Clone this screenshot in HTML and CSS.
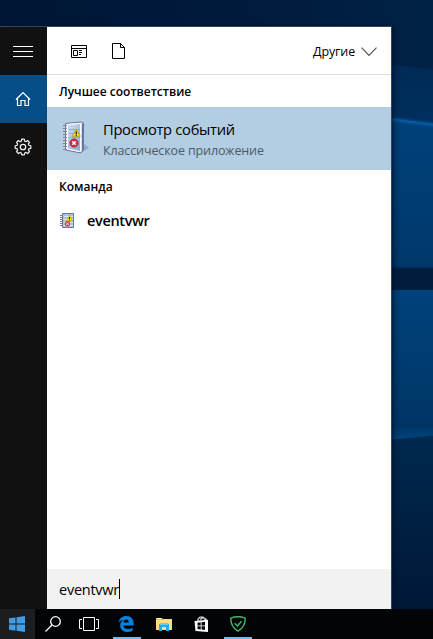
FILE: index.html
```html
<!DOCTYPE html>
<html lang="ru">
<head>
<meta charset="utf-8">
<title>Поиск</title>
<link rel="stylesheet" href="styles.css">
</head>
<body>
<div class="desktop">
  <svg class="wallpaper" viewBox="0 0 433 639" aria-hidden="true">
    <defs>
      <linearGradient id="base" x1="0" x2="1" y1="0" y2="0"><stop offset="0" stop-color="#001634"/><stop offset=".6" stop-color="#001b3d"/><stop offset="1" stop-color="#002247"/></linearGradient>
      <linearGradient id="beam" x1="0" x2="0" y1="0" y2="1"><stop offset="0" stop-color="#002a54"/><stop offset="1" stop-color="#003060"/></linearGradient>
      <linearGradient id="pane" x1="0" x2="0" y1="0" y2="1"><stop offset="0" stop-color="#004179"/><stop offset=".5" stop-color="#003d73"/><stop offset="1" stop-color="#00386b"/></linearGradient>
      <linearGradient id="pane2" x1="0" x2="0" y1="0" y2="1"><stop offset="0" stop-color="#00427b"/><stop offset=".4" stop-color="#003d72"/><stop offset=".9" stop-color="#003566"/><stop offset="1" stop-color="#004580"/></linearGradient>
      <linearGradient id="low" x1="0" x2="0" y1="0" y2="1"><stop offset="0" stop-color="#00294f"/><stop offset="1" stop-color="#001736"/></linearGradient>
      <linearGradient id="shade" x1="0" x2="1" y1="0" y2="0"><stop offset="0" stop-color="#00102a" stop-opacity=".4"/><stop offset="1" stop-color="#00102a" stop-opacity="0"/></linearGradient>
      <filter id="soft" x="-20%" y="-100%" width="140%" height="300%"><feGaussianBlur stdDeviation="1"/></filter>
    </defs>
    <path fill="url(#base)" d="M0 0h433v639H0z"/>
    <path fill="url(#beam)" d="M380 63l53 7v60h-53z"/>
    <path fill="url(#pane)" d="M380 117l53 7v144h-53z"/>
    <path filter="url(#soft)" fill="none" stroke="#075da6" stroke-width="3" d="M380 118l63 8"/>
    <path fill="#001a3a" filter="url(#soft)" d="M380 268h63v21h-63z"/>
    <path fill="url(#pane2)" d="M380 290h53v146l-53 5z"/>
    <path fill="url(#low)" d="M380 441l53-5v173h-53z"/>
    <path fill="url(#shade)" d="M391 27h10v582h-10z"/>
  </svg>

  <div class="panel">
    <nav class="rail">
      <div class="rail-item"><svg width="24" height="24" viewBox="0 0 24 24"><path stroke="#fff" d="M2 7.500h20M2 12.500h20M2 17.500h20"/></svg></div>
      <div class="rail-item active"><svg width="24" height="24" viewBox="0 0 24 24" fill="none" stroke="#fff" stroke-width="1.200"><path d="M5 12.500 12 5.500l7 7M6.500 11.500v7h3.500v-5h4v5h3.500v-7"/></svg></div>
      <div class="rail-item"><svg width="24" height="24" viewBox="-12 -12 24 24" fill="none" stroke="#f0f0f0" stroke-width="1.300"><circle r="2.700"/><path stroke-linejoin="round" d="M-1.400-7.400h2.800l.4 2 1.500.6 1.700-1.200 2 2-1.200 1.700.6 1.500 2 .4v2.800l-2 .4-.6 1.500L7 6l-2 2-1.700-1.200-1.500.6-.4 2h-2.800l-.4-2-1.500-.6L-5 8l-2-2 1.200-1.700-.6-1.500-2-.4v-2.800l2-.4.6-1.500L-7-4l2-2 1.700 1.200 1.500-.6z" transform="translate(0 -.9) scale(.93)"/></svg></div>
    </nav>
    <main class="results">
      <header class="filters">
        <svg class="filter-app" width="16" height="13" viewBox="0 0 16 13" fill="none" stroke="#000"><path d="M.5.500h15v12H.5zM0 3.500h16M2.500 5.500h4v5h-4zM8 5.500h3M8 7.500h2M10 7.500h1M8 9.500h2"/></svg>
        <svg class="filter-doc" width="13" height="16" viewBox="0 0 13 16" fill="none" stroke="#000"><path d="M.5.500h8l4 4v11H.5zM8.500.500v4h4"/></svg>
        <span class="more">Другие</span>
        <svg class="chevron" width="16" height="10" viewBox="0 0 16 10" fill="none" stroke="#555" stroke-width="1.200"><path d="M.5.700 8 8.300 15.500.700"/></svg>
      </header>
      <h2 class="heading"><span class="t-best">Лучшее соответствие</span></h2>
      <section class="best">
        <svg class="book" width="28" height="34" viewBox="0 0 28 34">
          <defs><linearGradient id="page" x1="0" x2="1" y1="0" y2="1"><stop offset="0" stop-color="#d3e1f0"/><stop offset="1" stop-color="#86a7cf"/></linearGradient></defs>
          <path fill="#7796b3" opacity=".55" d="M18 32l9-5-3-3-4-1z"/>
          <path fill="#f3f4fa" stroke="#6a7098" d="M3.500 2.500 19 1l2.500 1v26.500L19 32 3.500 29z"/>
          <path fill="#6873a8" d="M19.800 2.500 22 2v26.500L19.800 31z"/>
          <path fill="url(#page)" stroke="#f8faff" d="M5.500 3.500 18.500 2.500v28L5.500 28z"/>
          <path stroke="#8facd0" d="M7 8.500h11M7 12.500h11M7 16.500h11M7 20.500h11M7 24.500h11"/>
          <path stroke="#85868f" d="M1 4.500h4M1 7.500h4M1 10.500h4M1 13.500h4M1 16.500h4M1 19.500h4M1 22.500h4M1 25.500h4M1 28.500h4"/>
          <path fill="#ffdf00" stroke="#ab9300" stroke-width=".7" d="M14.300 8.300l4 7h-8z"/><path stroke="#222" stroke-width="1.300" d="M14.300 10.500v2.700m0 .6v1"/>
          <circle cx="12" cy="22" r="4.200" fill="#d52b36" stroke="#a11e2b" stroke-width=".5"/><path stroke="#fff" stroke-width="1.500" d="m10.200 20.200 3.600 3.600m0-3.600-3.600 3.600"/>
        </svg>
        <div class="best-text"><div><span class="best-title">Просмотр событий</span></div><div><span class="best-sub">Классическое приложение</span></div></div>
      </section>
      <h2 class="heading"><span class="t-cmd">Команда</span></h2>
      <div class="command">
        <svg class="book-small" width="15" height="16" viewBox="0 0 15 16">
          <path fill="#a9c4df" stroke="#66769d" d="M2.500.500h11v14h-11z"/><path stroke="#dce9f5" d="M4 3.500h9M4 6.500h9M4 9.500h9M4 12.500h9"/>
          <path stroke="#777c88" d="M0 2.500h3M0 4.500h3M0 6.500h3M0 8.500h3M0 10.500h3M0 12.500h3"/>
          <path fill="#ffe000" stroke="#a58e10" stroke-width=".5" d="m9.500 2 3 6h-6z"/><path stroke="#222" d="M9.500 4v2m0 .5v1"/>
          <circle cx="7.500" cy="10.800" r="2.700" fill="#d53b43"/><path stroke="#fff" stroke-width=".9" d="m6.300 9.600 2.400 2.400m0-2.400L6.300 12"/>
        </svg>
        <span class="command-name">eventvwr</span>
      </div>
      <div class="query"><span class="query-text">eventvwr</span><i class="caret"></i></div>
    </main>
  </div>

  <footer class="taskbar">
    <div class="task start"><svg width="16" height="16" viewBox="0 0 16 16" fill="#429ce3"><path d="M0 2.300 6.500 1.400v6.200H0zM7.500 1.200 16 0v7.600H7.500zM0 8.500h6.500v6.200L0 13.800zM7.500 8.500H16V16l-8.500-1.200z"/></svg></div>
    <div class="task"><svg width="16" height="16" viewBox="0 0 16 16" fill="none" stroke="#fff" stroke-width="1.300"><circle cx="10.500" cy="5.500" r="4.800"/><path d="M7 9 .5 15.500"/></svg></div>
    <div class="task views"><svg width="20" height="14" viewBox="0 0 20 14" fill="none" stroke="#fff"><path d="M4.500.500h11v13h-11zM3 2.500H.5v9H3M17 2.500h2.500v9H17"/></svg></div>
    <div class="task open edge"><svg width="16" height="16" viewBox="0 0 16 16"><path fill="#0c7edb" d="M.3 7C1.200 2.400 4.300 0 8.300 0c4.900 0 7.400 3.600 7.400 7.500v2H5.400c.1 2.600 2.500 3.500 4.700 3.500 1.700 0 3.100-.5 4.500-1.300v3.200c-1.500.7-3.200 1.100-5.200 1.100-4.300 0-7.200-2.400-7.200-6.500 0-2.500 1.300-4.700 3.700-5.800C3.400 4 1.400 5.300.3 7zm5.200-.6h5.200c0-1.800-.9-2.900-2.500-2.900S5.700 4.800 5.500 6.400z"/></svg></div>
    <div class="task"><svg width="16" height="15" viewBox="0 0 16 15"><path fill="#f0b944" d="M0 1h6l1 1h9v2H0z"/><path fill="#fff" d="M1 1h4v1H1z"/><path fill="#fcdc83" d="M0 3h7l1-1h8v11H0z"/><path fill="#27abea" d="M3 7.500 4 6.500h8l1 1V14h-3v-4H6v4H3z"/><path fill="#60d0f8" d="M4 6.500h8v1.500H4z"/></svg></div>
    <div class="task store"><svg width="15" height="17" viewBox="0 0 15 17"><path fill="none" stroke="#ddd" stroke-width="1.200" d="M4 5V3l2-2h3l2 2v2M7 4V2.500l2-.8 3 1.500V5"/><path fill="#fff" d="M.5 5 14 3.800V16L1.500 15z"/><path fill="#05080c" d="m3.500 6.700 3.200-.4v3.200H3.500zm4-.5L11 5.700v3.800H7.500zm-4 4.100h3.200v3.200l-3.200-.4zm4 0H11v3.800l-3.500-.5z"/></svg></div>
    <div class="task open"><svg width="16" height="16" viewBox="0 0 16 16" fill="none" stroke="#42b966" stroke-width="1.400"><path d="M8 .8c2.500 0 5 .5 7.200 1.400 0 5.600-1.200 9.600-7.200 13-6-3.400-7.200-7.400-7.200-13C3 1.300 5.500.8 8 .8z"/><path d="m4.700 7.200 2.700 2.700 4.100-4.700"/></svg></div>
  </footer>
</div>
</body>
</html>
```
FILE: styles.css
```css
* { box-sizing: border-box; }
body { margin: 0; font-family: "Open Sans", "Noto Sans", sans-serif; color: #000; }
svg { display: block; flex: none; }
.desktop { position: relative; width: 433px; height: 639px; display: flex; flex-direction: column; overflow: hidden; }
.wallpaper { position: absolute; inset: 0; width: 433px; height: 639px; }
.panel { position: relative; display: flex; width: 392px; height: 583px; margin-top: 26px; border: solid #30465c; border-width: 1px 1px 0 0; box-shadow: 0 0 3px #00102a; }
.rail { width: 47px; background: #111; }
.rail-item { height: 48px; display: flex; align-items: center; justify-content: center; padding-right: 1px; }
.active { background: #064e88; }
.results { flex: 1; background: #fff; display: flex; flex-direction: column; }
.filters { height: 48px; border-bottom: 1px solid #dedede; display: flex; align-items: center; padding: 1px 14px 0 24px; }
.filter-doc { margin-left: 25px; }
.more { margin-left: auto; margin-right: 6px; font-size: 12.500px; letter-spacing: -.15px; }
.chevron { margin-top: 1px; }
.heading { margin: 0; height: 32px; padding-left: 12px; font-size: 12px; font-weight: 600; line-height: 33px; white-space: nowrap; }
.best { height: 63px; background: #b3cde2; display: flex; padding: 14px 0 0 15px; }
.best-text { margin: -3px 0 0 13px; white-space: nowrap; }
.best-title { font-size: 14.700px; letter-spacing: -.28px; }
.best-sub { font-size: 12.500px; letter-spacing: -.12px; color: #4b5b66; }
.best-text div { height: 21px; line-height: 21px; }
.best-text div:first-child { line-height: 23px; }
.command { display: flex; align-items: center; height: 38px; padding-left: 13px; }
.command-name { margin: -2px 0 0 12px; font-size: 14.500px; font-weight: 600; letter-spacing: -.35px; }
.query { height: 40px; margin-top: auto; padding-left: 12px; background: #f2f2f2; display: flex; align-items: center; font-size: 14.500px; letter-spacing: -.25px; }
.caret { width: 1px; height: 20px; background: #000; }
.taskbar { position: relative; height: 30px; display: flex; background: #020407; }
.task { width: 37px; height: 30px; display: flex; align-items: center; justify-content: center; position: relative; padding-right: 2px; }
.start { width: 35px; background: #1b1d20; padding-right: 1px; }
.views, .edge { padding-right: 3px; }
.store { padding-right: 1px; }
.open::after { content: ""; position: absolute; left: 4px; bottom: 0; width: 28px; height: 2px; background: #76b9ed; }
```
